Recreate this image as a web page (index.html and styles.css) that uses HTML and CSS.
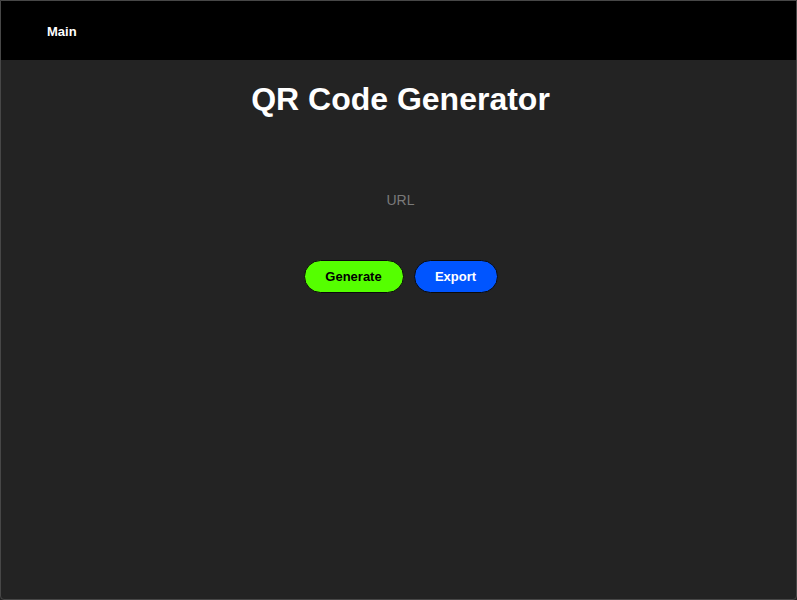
FILE: index.html
```html
<!DOCTYPE html>
<html>
<head>
<meta charset="utf-8">
<link rel="stylesheet" href="styles.css">
</head>
<body>
<div class="frame">
  <header class="topbar">
    <span class="nav-link">Main</span>
  </header>
  <main class="content">
    <h1 class="title">QR Code Generator</h1>
    <input class="url-input" type="text" placeholder="URL">
    <div class="actions">
      <button class="btn btn-generate">Generate</button>
      <button class="btn btn-export">Export</button>
    </div>
  </main>
</div>
</body>
</html>
```
FILE: styles.css
```css
html, body {
  margin: 0;
  padding: 0;
  height: 100%;
  background: #232323;
}
.frame {
  box-sizing: border-box;
  height: 600px;
  border: 1px solid #474747;
  border-radius: 0 0 4px 4px;
  background: #232323;
  display: flex;
  flex-direction: column;
  font-family: "Liberation Sans", Arial, sans-serif;
}
.topbar {
  height: 59px;
  background: #000;
  display: flex;
  align-items: center;
  padding-left: 46px;
}
.nav-link {
  color: #fff;
  font-weight: bold;
  font-size: 13px;
  padding-top: 2px;
}
.content {
  display: flex;
  flex-direction: column;
  align-items: center;
  padding-left: 4px;
}
.title {
  margin: 21px 0 0;
  color: #fff;
  font-size: 32px;
  font-weight: bold;
  line-height: 37px;
}
.url-input {
  margin-top: 70px;
  width: 200px;
  height: 24px;
  background: transparent;
  border: none;
  outline: none;
  text-align: center;
  font-family: "Liberation Sans", Arial, sans-serif;
  font-size: 14px;
  color: #ddd;
  padding: 0;
}
.url-input::placeholder {
  color: #7a7a7a;
}
.actions {
  margin-top: 48px;
  display: flex;
  gap: 10px;
}
.btn {
  height: 33px;
  border: 1px solid #0a0a0a;
  border-radius: 17px;
  font-family: "Liberation Sans", Arial, sans-serif;
  font-size: 13px;
  font-weight: bold;
  padding: 0;
  cursor: pointer;
}
.btn-generate {
  width: 100px;
  background: #55ff00;
  color: #000;
}
.btn-export {
  width: 84px;
  background: #0055ff;
  color: #fff;
}
```
